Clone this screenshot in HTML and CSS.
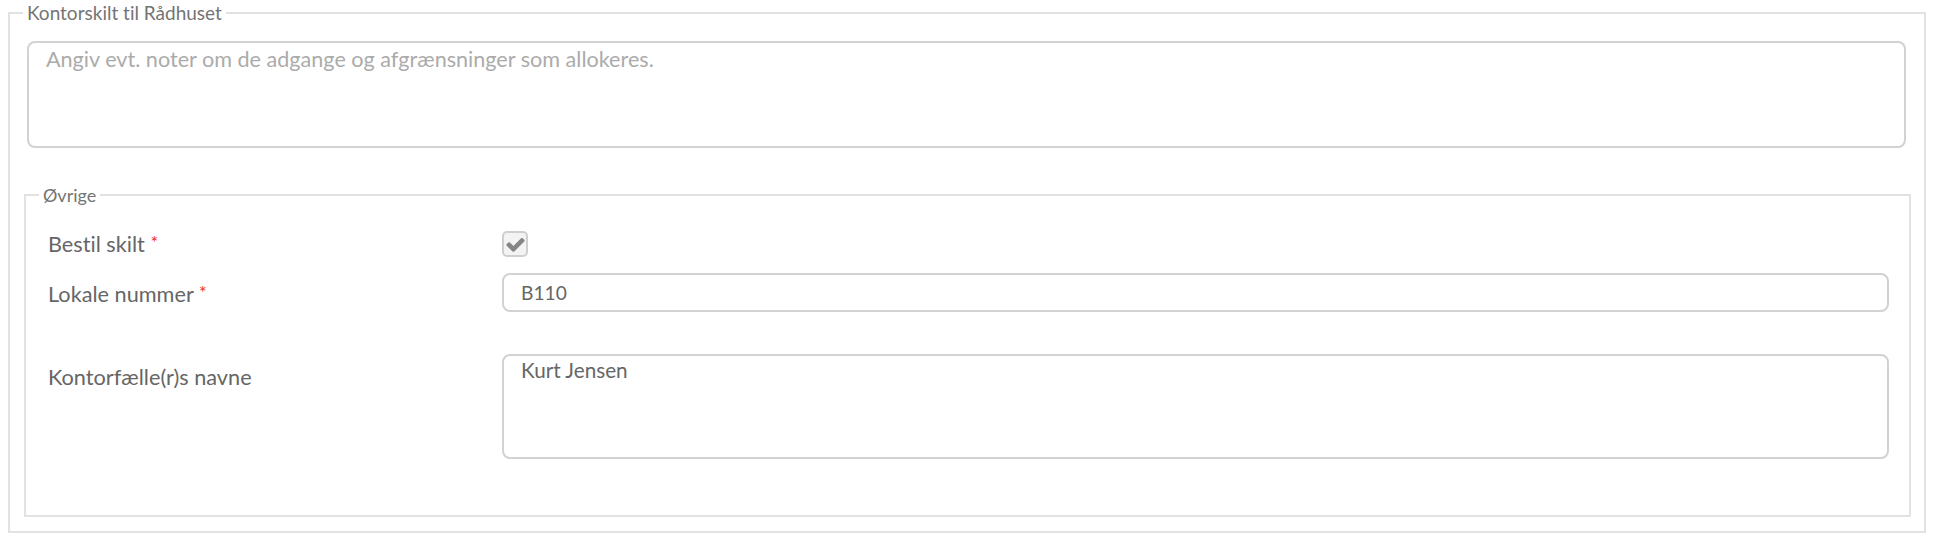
FILE: index.html
```html
<!DOCTYPE html>
<html lang="da">
<head>
<meta charset="utf-8">
<title>Kontorskilt til Rådhuset</title>
<link rel="stylesheet" href="styles.css">
</head>
<body>
<fieldset class="group">
  <legend class="group-legend">Kontorskilt til Rådhuset</legend>
  <textarea class="notes" placeholder="Angiv evt. noter om de adgange og afgrænsninger som allokeres."></textarea>
  <fieldset class="sub">
    <legend class="sub-legend">Øvrige</legend>
    <div class="row row-check">
      <label class="label">Bestil skilt <span class="req">*</span></label>
      <div class="control">
        <span class="checkbox">
          <svg viewBox="0 0 1792 1792" width="21" height="21" aria-hidden="true"><path fill="#858585" d="M1671 566q0 40-28 68l-724 724-136 136q-28 28-68 28t-68-28l-136-136-362-362q-28-28-28-68t28-68l136-136q28-28 68-28t68 28l294 295 656-657q28-28 68-28t68 28l136 136q28 28 28 68z"/></svg>
        </span>
      </div>
    </div>
    <div class="row row-input">
      <label class="label">Lokale nummer <span class="req">*</span></label>
      <div class="control"><input class="text-input" type="text" value="B110"></div>
    </div>
    <div class="row row-area">
      <label class="label">Kontorfælle(r)s navne</label>
      <div class="control"><textarea class="area">Kurt Jensen</textarea></div>
    </div>
  </fieldset>
</fieldset>
</body>
</html>
```
FILE: styles.css
```css
html, body {
  background: #ffffff;
}
body {
  margin: 0 12px 0 8px;
  font-family: Lato, "Open Sans", sans-serif;
  font-variant-ligatures: none;
  color: #666666;
}
.group {
  margin: 0;
  border: 2px solid #e2e2e2;
  padding: 15px 18px 14px 17px;
  min-width: 0;
}
.group-legend {
  margin-left: -4px;
  padding: 0 4px;
  font-size: 19px;
  line-height: 26px;
  color: #747474;
}
.notes {
  display: block;
  box-sizing: border-box;
  width: 100%;
  height: 107px;
  margin: 0;
  border: 2px solid #d2d2d2;
  border-radius: 8px;
  padding: 3px 17px;
  font-family: inherit;
  font-variant-ligatures: none;
  font-size: 21.6px;
  line-height: 26px;
  color: #666666;
  resize: none;
  outline: none;
}
.notes::placeholder {
  color: #ababab;
}
.sub {
  margin: 35px -5px 0 -3px;
  border: 2px solid #e2e2e2;
  padding: 24px 20px 56px 22px;
  min-width: 0;
}
.sub-legend {
  margin-left: -9px;
  padding: 0 4px;
  font-size: 18px;
  line-height: 24px;
  color: #747474;
}
.row {
  display: flex;
  align-items: flex-start;
}
.row-input {
  margin-top: 16px;
}
.row-area {
  margin-top: 42px;
}
.label {
  flex: 0 0 454px;
  font-size: 21.7px;
  line-height: 24px;
  margin-top: -1px;
  color: #666666;
}
.row-input .label {
  padding-top: 8px;
}
.row-area .label {
  padding-top: 12px;
}
.req {
  color: #f02a2a;
  font-size: 18px;
  vertical-align: 3px;
}
.control {
  flex: 1 1 auto;
  min-width: 0;
}
.checkbox {
  box-sizing: border-box;
  display: flex;
  align-items: center;
  justify-content: center;
  width: 26px;
  height: 26px;
  border: 2px solid #cfcfcf;
  border-radius: 5px;
  background: #f3f3f3;
}
.checkbox svg {
  display: block;
  margin-top: 1px;
}
.text-input {
  display: block;
  box-sizing: border-box;
  width: 100%;
  height: 39px;
  margin: 0;
  border: 2px solid #d2d2d2;
  border-radius: 8px;
  padding: 0 17px;
  font-family: inherit;
  font-variant-ligatures: none;
  font-size: 19.2px;
  color: #666666;
  background: #ffffff;
  outline: none;
}
.area {
  display: block;
  box-sizing: border-box;
  width: 100%;
  height: 105px;
  margin: 0;
  border: 2px solid #d2d2d2;
  border-radius: 8px;
  padding: 1px 17px;
  font-family: inherit;
  font-variant-ligatures: none;
  font-size: 20.7px;
  line-height: 26px;
  color: #666666;
  resize: none;
  outline: none;
}
```
